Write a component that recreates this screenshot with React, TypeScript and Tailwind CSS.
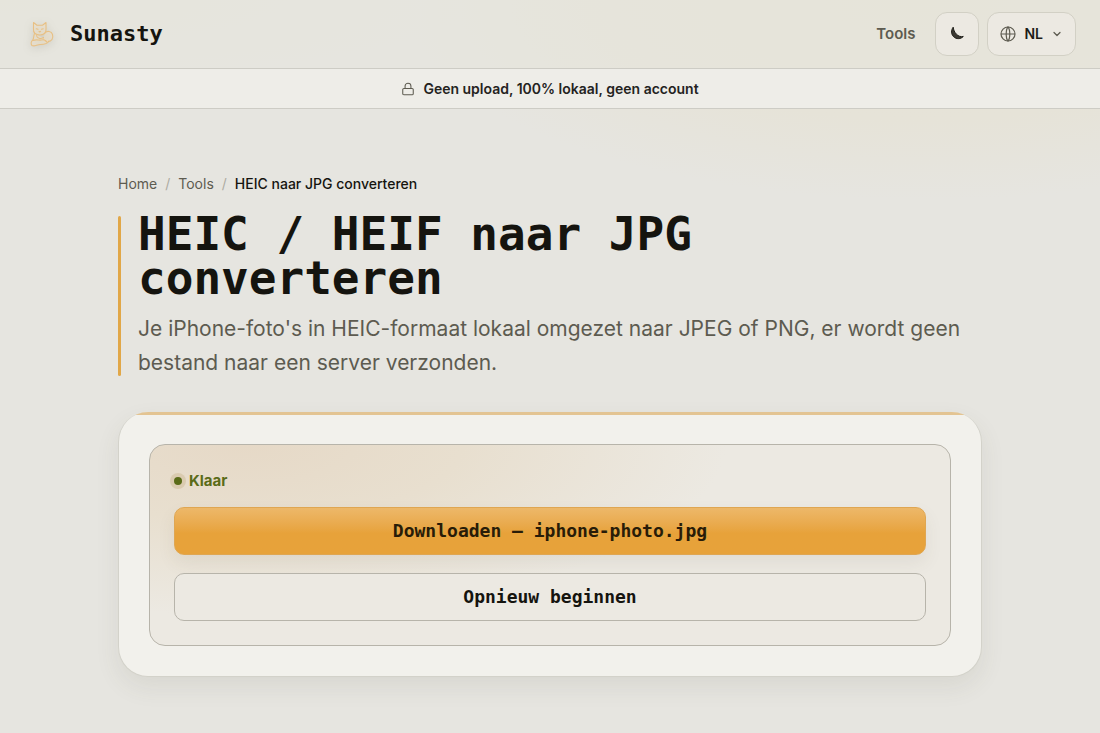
import { ChevronDown, Lock } from "lucide-react";
import type { ReactNode } from "react";

const SITE_NAME = "Sunasty";

const CatLogo = () => (
  <svg
    aria-hidden="true"
    viewBox="0 0 28 28"
    className="h-7 w-7 drop-shadow-[0_2px_4px_rgba(90,85,60,0.2)]"
    fill="#ebdfca"
    fillOpacity="0.6"
    stroke="#e8c084"
    strokeWidth="1.1"
    strokeLinecap="round"
    strokeLinejoin="round"
  >
    <path d="M17 13C19 10.500 23.500 11 24.500 14.500C25.700 18.500 23.500 21.500 20 21.500C16.500 21.500 15 20 15.500 18" />
    <path d="M6.500 13.500C5.500 16 6 18 4.800 20C3 21.500 2.500 24 4 25.500C6.500 27 9 24.500 12.500 24.500C16 24.500 19.500 23.500 21 21" />
    <path d="M5.500 9V2.500L9 5.200H14.500L18 2.500V9C18.500 13 15.500 15 11.800 15C8 15 5 13 5.500 9Z" />
    <path fill="none" d="M8.200 8.800L10 9.300M13.400 9.300L15.200 8.800M11 11.300L11.800 12L12.600 11.300" />
    <path fill="none" d="M8.500 15.500C9 18 12.500 19.500 15.500 17.500M5 20.500C8 19 10.500 20.500 13.500 20C16 19.500 18 20 18.500 22" />
  </svg>
);

const MoonIcon = () => (
  <svg aria-hidden="true" viewBox="0 0 16 16" className="h-4 w-4">
    <path
      d="M4.200 1.200C1.900 4.200 2 8.200 4.700 10.800C7.300 13.300 11.700 13.300 14.300 10.500C11.800 11 9.300 10.200 7.400 8.200C5.500 6.200 4.500 3.800 4.200 1.200Z"
      fill="#3b3932"
      stroke="#1d1c17"
      strokeWidth="1"
      strokeLinejoin="round"
    />
  </svg>
);

const GlobeIcon = () => (
  <svg aria-hidden="true" viewBox="0 0 16 16" className="h-4 w-4" fill="none" stroke="#5d5b50" strokeWidth="1.200">
    <circle cx="8" cy="8" r="7" />
    <path d="M1 8H15M8 1C5.600 3.500 5.600 12.500 8 15C10.400 12.500 10.400 3.500 8 1Z" />
  </svg>
);

const Header = () => (
  <header className="flex h-[69px] items-center justify-between border-b border-[#cdccc5] bg-[#e6e5dd]/50 px-6 pl-7">
    <a href="#" className="flex items-center gap-3.5">
      <CatLogo />
      <span className="font-['DejaVu_Sans_Mono',monospace] text-[22px] leading-7 font-bold text-[#15140f]">{SITE_NAME}</span>
    </a>
    <nav className="flex items-center gap-2">
      <a href="#tools" className="mr-3 text-[15px] font-semibold text-[#5d5b50]">
        Tools
      </a>
      <button
        type="button"
        aria-label="Donker thema"
        className="grid h-11 w-11 place-items-center rounded-xl border border-[#d2d0c5] bg-[#ece9e2]"
      >
        <MoonIcon />
      </button>
      <button
        type="button"
        aria-haspopup="listbox"
        aria-label="Taal: NL"
        className="flex h-11 items-center gap-2 rounded-xl border border-[#d2d0c5] bg-[#ece9e2] px-3 text-sm font-semibold text-[#1d1c17]"
      >
        <GlobeIcon />
        <span>NL</span>
        <ChevronDown aria-hidden="true" strokeWidth={2.5} className="h-3 w-3 text-[#5d5b50]" />
      </button>
    </nav>
  </header>
);

const Breadcrumbs = () => (
  <nav aria-label="Kruimelpad" className="text-sm text-[#5d5b50]">
    <ol className="flex items-center gap-2">
      <li><a href="#">Home</a></li>
      <li aria-hidden="true" className="text-[#adaba2]">/</li>
      <li><a href="#tools">Tools</a></li>
      <li aria-hidden="true" className="text-[#adaba2]">/</li>
      <li aria-current="page" className="font-medium text-[#15140f]">HEIC naar JPG converteren</li>
    </ol>
  </nav>
);

const Card = ({ children }: { children: ReactNode }) => (
  <section className="relative mt-9 overflow-hidden rounded-[30px] border border-t-0 border-[#d3d2ca] bg-[#f2f1ec] p-[30px] pt-8 shadow-[0_10px_24px_rgba(80,78,50,0.09)]">
    {/* accent line along the top edge, clipped by the rounded corners */}
    <div className="absolute inset-x-0 top-0 h-[3px] bg-[#e3c492]" />
    {children}
  </section>
);

const App = () => (
  <div className="min-h-screen bg-[#e6e5e0] bg-[radial-gradient(ellipse_520px_200px_at_84%_0,#e6e2d5_0%,#e6e3d8_60%,transparent_100%),radial-gradient(ellipse_480px_80px_at_0_0,#e6e5db_0%,transparent_100%)] bg-no-repeat font-[Inter,sans-serif]">
    <Header />
    <div className="flex h-10 items-center justify-center gap-2 border-b border-[#cdccc5] bg-[#eeede8] text-sm font-semibold text-[#24231e]">
      <Lock aria-hidden="true" strokeWidth={1.8} className="h-3.5 w-3.5 text-[#5d5b50]" />
      <span>Geen upload, 100% lokaal, geen account</span>
    </div>

    <main className="mx-auto max-w-[912px] px-6 pt-[65px] pb-14">
      <Breadcrumbs />

      <div className="mt-[22px] flex gap-[17px]">
        <div className="w-[3px] shrink-0 rounded-sm bg-[#e1a748]" />
        <div className="-my-1">
          <h1 className="max-w-[620px] font-['DejaVu_Sans_Mono',monospace] text-[46px] leading-[44px] font-bold text-[#15140f]">
            HEIC / HEIF naar JPG converteren
          </h1>
          <p className="mt-3 text-[21px] leading-[34px] text-[#5d5b50]">
            Je iPhone-foto's in HEIC-formaat lokaal omgezet naar JPEG of PNG, er wordt geen bestand naar een server
            verzonden.
          </p>
        </div>
      </div>

      <Card>
        <div className="rounded-2xl border border-[#b7b4aa] bg-[#ece9e2] bg-[radial-gradient(ellipse_60%_85%_at_12%_0,#e6d9c7_0%,#e8dfcf_45%,#ece9e2_100%)] p-6">
          <p role="status" className="flex items-center gap-[7px] text-[15px] leading-6 font-bold text-[#5a6b18]">
            <span className="h-2 w-2 rounded-full bg-[#5a6b18] ring-4 ring-[#dacbb0]" />
            Klaar
          </p>
          <div className="mt-[14px] grid gap-[18px] font-['DejaVu_Sans_Mono',monospace] text-lg font-bold">
            <button
              type="button"
              className="h-12 rounded-[10px] border border-[#dfa652] bg-linear-to-b from-[#edb869] to-[#e7a23a] to-55% text-[#281c08] shadow-[0_8px_18px_rgba(90,80,50,0.08)]"
            >
              Downloaden — iphone-photo.jpg
            </button>
            <button type="button" className="h-12 rounded-[10px] border border-[#b7b4aa] bg-[#ece9e2] text-[#15140f]">
              Opnieuw beginnen
            </button>
          </div>
        </div>
      </Card>
    </main>
  </div>
);

export default App;
